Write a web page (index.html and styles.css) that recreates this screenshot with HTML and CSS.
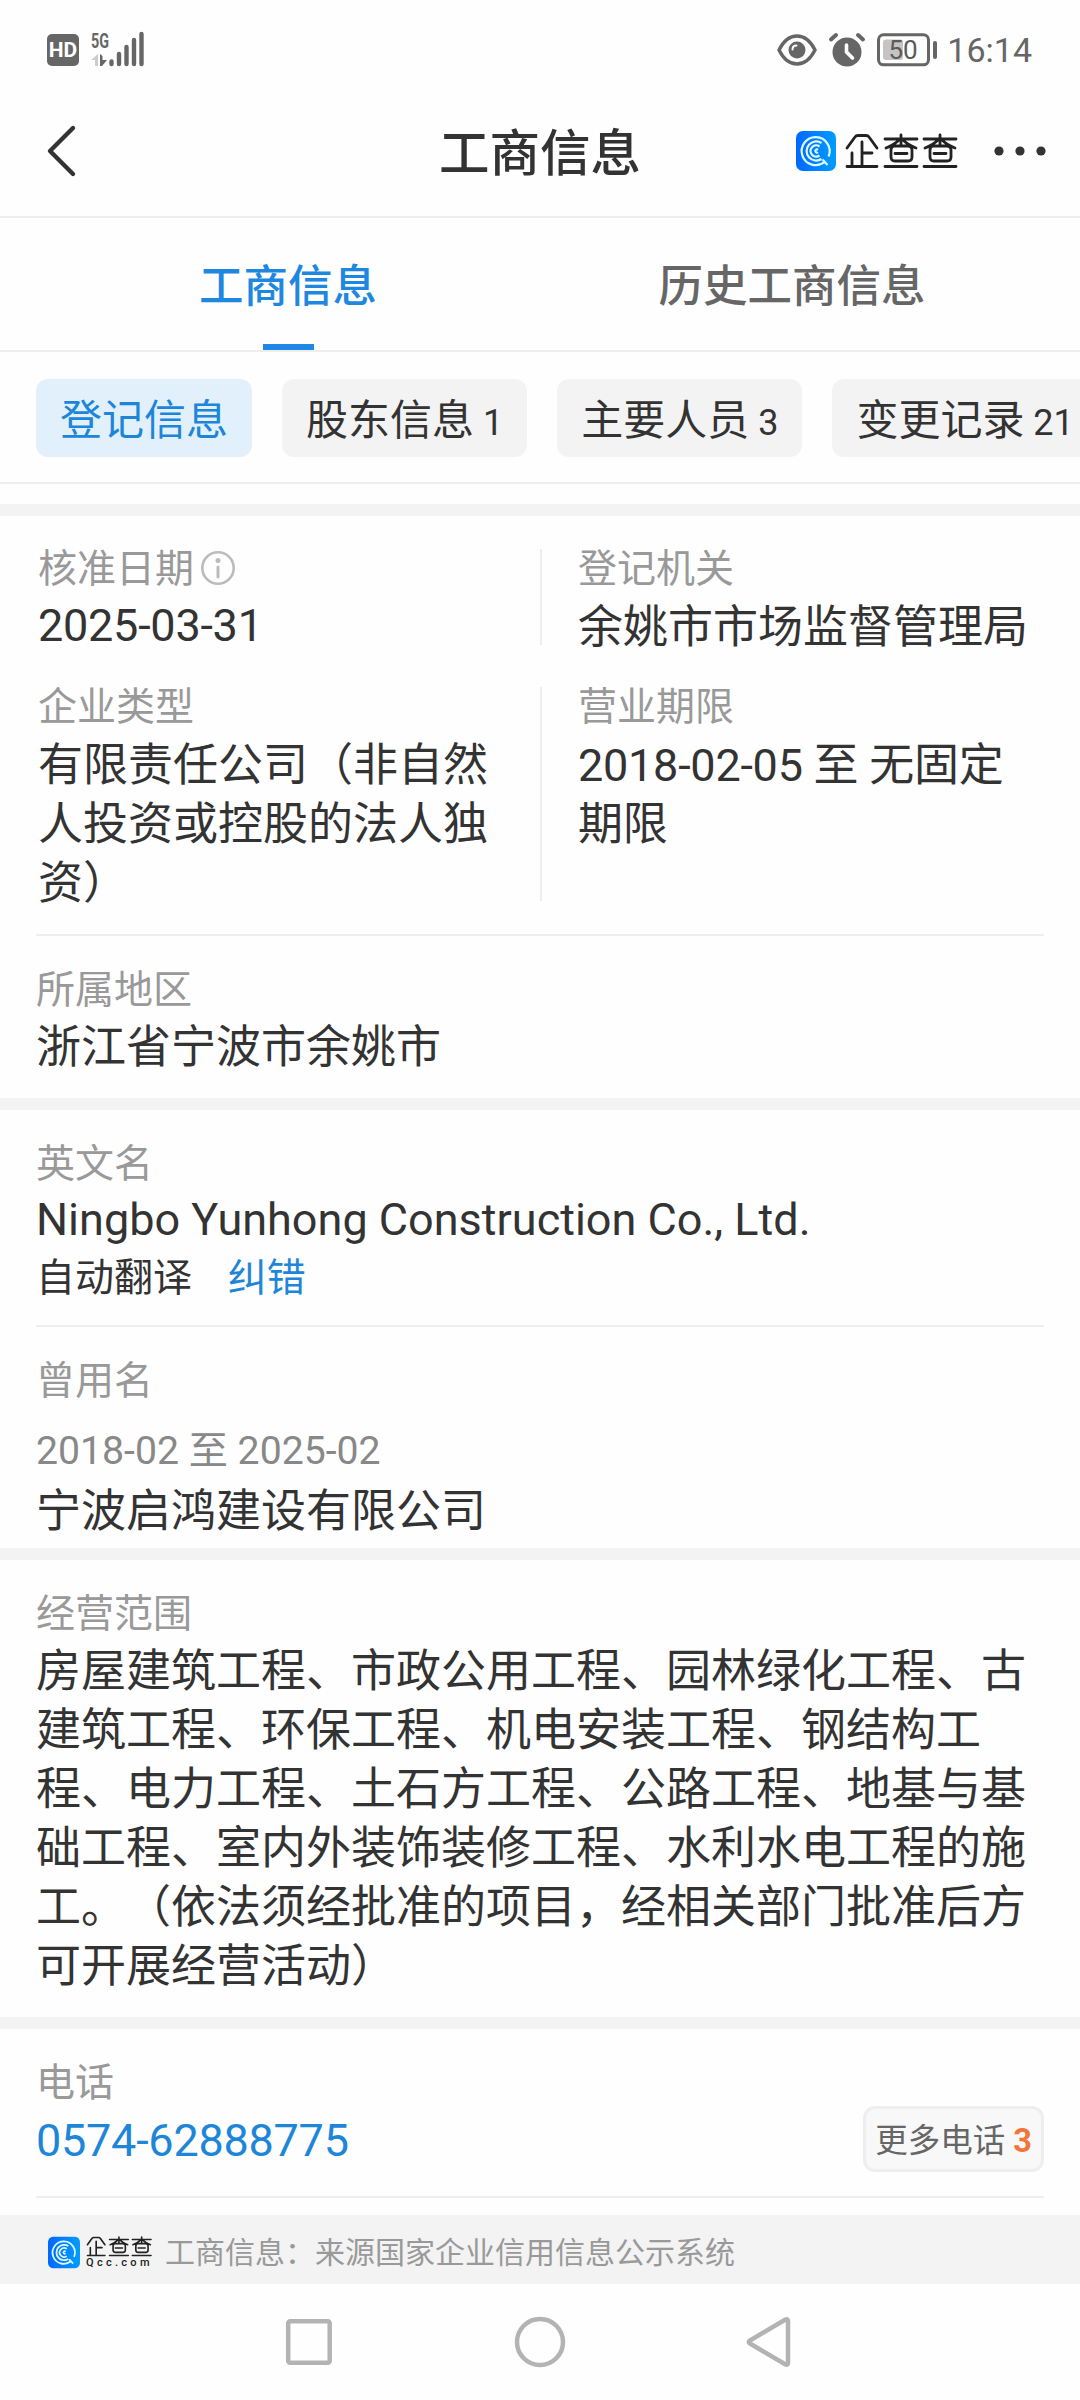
FILE: index.html
```
<!DOCTYPE html>
<html lang="zh-CN">
<head>
  <meta charset="UTF-8">
  <meta name="viewport" content="width=device-width, initial-scale=1.0">
  <title>工商信息</title>
  <link rel="stylesheet" href="styles.css">
</head>
<body>
  <!-- shared logo -->
  <svg class="defs" width="0" height="0">
    <defs>
      <linearGradient id="logoBg" x1="0" y1="0" x2="1" y2="0">
        <stop offset="0" stop-color="#0068ff"/>
        <stop offset="1" stop-color="#009dff"/>
      </linearGradient>
      <symbol id="logo" viewBox="0 0 40 40">
        <rect width="40" height="40" rx="7" fill="url(#logoBg)"/>
        <g fill="none" stroke="#dcfaff" stroke-width="2.2">
          <path d="M32.6 25.500A14 14 0 1 0 28.500 31M26.500 28.500l5 5.500"/>
          <path d="M25.500 12A9.600 9.600 0 1 0 25.500 28"/>
          <path d="M23.500 15.500A5.600 5.600 0 1 0 23.500 24.500"/>
          <path d="M22 18.800A1.600 1.600 0 1 0 22 21.200"/>
        </g>
      </symbol>
      <symbol id="wordmark" viewBox="0 0 114 36">
        <g fill="none" stroke="#222" stroke-width="2.8" stroke-linecap="round" stroke-linejoin="round">
          <path d="M2 15L10 4Q11 2.500 13 2.500H21Q23 2.500 24 4L32 15M17 9V33M17 20H27M7 20V33M2 33.500H32"/>
          <path id="cha" d="M40 6H72M56 2V12M54 7Q49 12 41 15M58 7Q63 12 71 15M49 13H63Q67 13 67 17V24Q67 28 63 28H50Q46 28 46 24V17Q46 13 49 13M50 20.500H62M40 33.500H72"/>
          <use href="#cha" x="39"/>
        </g>
      </symbol>
    </defs>
  </svg>

  <div class="status-bar">
    <div class="status-left">
      <span class="hd">HD</span>
      <svg class="signal" width="54" height="40" viewBox="0 -2 54 40">
        <text x="0" y="15.500" font-size="21" font-weight="700" textLength="18" lengthAdjust="spacingAndGlyphs" fill="#666">5G</text>
        <path d="M7 22V34H4V28H0Z" fill="#ccc"/>
        <path d="M9 22L11.500 24V28H16L11 34H9Z" fill="#666"/>
        <path d="M20.500 29.500V32M28 22V32M35.500 15V32M43 8V32M50.500 2V32" stroke="#666" stroke-width="4.400" stroke-linecap="round"/>
      </svg>
    </div>
    <div class="status-right">
      <svg width="40" height="32" viewBox="0 0 40 32">
        <path d="M2 16Q9 2 20 2T38 16Q31 30 20 30T2 16Z" fill="none" stroke="#666" stroke-width="3.400"/>
        <circle cx="20" cy="16" r="8.500" fill="#666"/>
        <path d="M15.500 15.500Q15.500 11.500 19.500 11.500" fill="none" stroke="#fff" stroke-width="2" stroke-linecap="round"/>
      </svg>
      <svg class="alarm" width="36" height="34" viewBox="0 0 36 34">
        <circle cx="18" cy="19" r="14.500" fill="#666"/>
        <path d="M2 6.500L7 2M34 6.500L29 2" stroke="#666" stroke-width="4" stroke-linecap="round"/>
        <path d="M17.500 12V19L23.500 25" fill="none" stroke="#fff" stroke-width="3.600" stroke-linecap="round"/>
      </svg>
      <svg class="battery" width="61" height="34" viewBox="0 0 61 34">
        <rect x="1.500" y="1.800" width="50" height="30" rx="5" fill="none" stroke="#666" stroke-width="3"/>
        <rect x="6" y="6.500" width="20" height="20.500" rx="3" fill="#c4c4c4"/>
        <rect x="56" y="8" width="4" height="18" rx="2" fill="#666"/>
        <text x="26" y="25.500" font-size="26" text-anchor="middle" fill="#5a5a5a">50</text>
      </svg>
      <span class="time">16:14</span>
    </div>
  </div>

  <header class="header">
    <svg class="back" width="30" height="54" viewBox="0 0 30 54">
      <path d="M26 4L3 27L26 50" fill="none" stroke="#333" stroke-width="4.400" stroke-linecap="round" stroke-linejoin="round"/>
    </svg>
    <h1>工商信息</h1>
    <div class="header-right">
      <svg class="logo" width="40" height="40"><use href="#logo"/></svg>
      <svg class="wordmark" width="114" height="36" role="img" aria-label="企查查"><use href="#wordmark"/></svg>
      <svg class="more" width="54" height="12" viewBox="0 0 54 12" fill="#333">
        <circle cx="6" cy="6" r="4.600"/><circle cx="27" cy="6" r="4.600"/><circle cx="48" cy="6" r="4.600"/>
      </svg>
    </div>
  </header>

  <nav class="tabs">
    <a class="tab active">工商信息</a>
    <a class="tab">历史工商信息</a>
  </nav>

  <div class="chips">
    <a class="chip active">登记信息</a>
    <a class="chip">股东信息<span> 1</span></a>
    <a class="chip">主要人员<span> 3</span></a>
    <a class="chip">变更记录<span> 21</span></a>
  </div>

  <main>
    <section class="block base-info">
      <div class="row">
        <div class="cell">
          <div class="label">核准日期
            <svg class="info" width="36" height="36" viewBox="0 0 36 36">
              <circle cx="18" cy="18" r="15.700" fill="none" stroke="#bbb" stroke-width="2.600"/>
              <circle cx="18" cy="10.500" r="2.500" fill="#bbb"/>
              <path d="M18 17V27" stroke="#bbb" stroke-width="3" stroke-linecap="round"/>
            </svg>
          </div>
          <div class="value date">2025-03-31</div>
        </div>
        <div class="rule"></div>
        <div class="cell">
          <div class="label">登记机关</div>
          <div class="value">余姚市市场监督管理局</div>
        </div>
      </div>
      <div class="row">
        <div class="cell">
          <div class="label">企业类型</div>
          <div class="value">有限责任公司（非自然人投资或控股的法人独资）</div>
        </div>
        <div class="rule"></div>
        <div class="cell">
          <div class="label">营业期限</div>
          <div class="value term">2018-02-05 至 无固定期限</div>
        </div>
      </div>
      <div class="item region">
        <div class="label">所属地区</div>
        <div class="value">浙江省宁波市余姚市</div>
      </div>
    </section>

    <section class="block names">
      <div class="item english">
        <div class="label">英文名</div>
        <div class="value">Ningbo Yunhong Construction Co., Ltd.</div>
        <div class="note">自动翻译 <a>纠错</a></div>
      </div>
      <div class="item former">
        <div class="label">曾用名</div>
        <div class="period">2018-02 至 2025-02</div>
        <div class="value">宁波启鸿建设有限公司</div>
      </div>
    </section>

    <section class="block scope">
      <div class="label">经营范围</div>
      <div class="value">房屋建筑工程、市政公用工程、园林绿化工程、古建筑工程、环保工程、机电安装工程、钢结构工程、电力工程、土石方工程、公路工程、地基与基础工程、室内外装饰装修工程、水利水电工程的施工。（依法须经批准的项目，经相关部门批准后方可开展经营活动）</div>
    </section>

    <section class="block phone">
      <div class="phone-row">
        <div>
          <div class="label">电话</div>
          <div class="value"><a>0574-62888775</a></div>
        </div>
        <button class="more-phone">更多电话 <b>3</b></button>
      </div>
    </section>
  </main>

  <footer class="source">
    <svg width="32" height="33" viewBox="0 0 40 40"><use href="#logo"/></svg>
    <div class="brand">
      <svg width="67" height="21" viewBox="0 0 114 36" role="img" aria-label="企查查"><use href="#wordmark"/></svg>
      <span>Qcc.com</span>
    </div>
    <p>工商信息：来源国家企业信用信息公示系统</p>
  </footer>

  <div class="nav-bar">
    <svg width="54" height="54" viewBox="0 0 54 54"><rect x="6.200" y="6.200" width="41.500" height="41.500" rx="2"/></svg>
    <svg width="54" height="54" viewBox="0 0 54 54"><circle cx="27" cy="27" r="23"/></svg>
    <svg width="54" height="54" viewBox="0 0 54 54"><path d="M41.500 4.500L6 25.500Q3.500 27 6 28.500L41.500 49.500Q44 50.500 44 48V6Q44 3.500 41.500 4.500Z"/></svg>
  </div>
</body>
</html>
```
FILE: styles.css
```
* {
  box-sizing: border-box;
}
body {
  margin: 0;
  width: 1080px;
  height: 2400px;
  overflow: hidden;
  display: flex;
  flex-direction: column;
  background: #fefefe;
  color: #333;
  font-family: Roboto, "Noto Sans CJK SC", sans-serif;
  text-spacing-trim: space-all;
}
svg {
  display: block;
  flex: none;
  overflow: visible;
}
.defs {
  position: absolute;
}
a {
  color: #1e86d8;
}

/* status bar */
.status-bar {
  height: 100px;
  padding: 0 48px 0 47px;
  display: flex;
  justify-content: space-between;
  align-items: center;
  color: #666;
}
.status-left, .status-right {
  display: flex;
  align-items: center;
}
.hd {
  width: 32px;
  height: 32px;
  border-radius: 5px;
  background: #666;
  color: #fff;
  font-size: 21px;
  font-weight: 700;
  line-height: 33px;
  text-align: center;
}
.signal {
  margin-left: 12px;
}
.alarm {
  margin-left: 12px;
}
.battery {
  margin-left: 12px;
}
.time {
  margin-left: 9px;
  font-size: 34px;
  line-height: 40px;
}

/* header */
.header {
  height: 118px;
  border-bottom: 2px solid #eee;
  display: grid;
  grid-template-columns: 1fr auto 1fr;
  align-items: center;
  padding: 0 33px 14px;
}
.back {
  margin-left: 14px;
}
.header h1 {
  margin: 5px 0 0;
  font-size: 50.5px;
  font-weight: 500;
  line-height: 60px;
}
.header-right {
  display: flex;
  justify-content: flex-end;
  align-items: center;
}
.wordmark {
  margin-left: 9px;
}
.more {
  margin-left: 34px;
}

/* tabs */
.tabs {
  height: 134px;
  border-bottom: 2px solid #eee;
  padding: 0 36px;
  display: grid;
  grid-template-columns: 1fr 1fr;
}
.tab {
  display: flex;
  flex-direction: column;
  align-items: center;
  justify-content: space-between;
  padding-top: 39px;
  font-size: 44.5px;
  font-weight: 500;
  line-height: 60px;
  color: #666;
}
.tab.active {
  color: #1e88e0;
}
.tab.active::after {
  content: "";
  width: 51px;
  height: 6px;
  background: #1e88e5;
}

.chips {
  height: 132px;
  border-bottom: 2px solid #eee;
  padding: 27px 0 0 36px;
  display: flex;
  gap: 30px;
  overflow: hidden;
}
.chip {
  flex: none;
  height: 78px;
  padding: 0 24px;
  border-radius: 12px;
  background: #f3f3f3;
  color: #333;
  font-size: 42px;
  line-height: 83px;
  white-space: pre;
}
.chip.active {
  background: #e2f0fc;
  color: #1e86d8;
}
.chip span {
  font-size: 36px;
}

/* blocks */
main {
  margin-top: 20px;
  height: 1711px;
}
.block {
  border-top: 12px solid #f3f3f3;
}
.label {
  display: flex;
  align-items: center;
  font-size: 39px;
  line-height: 46px;
  margin-bottom: 5px;
  color: #999;
}
.info {
  margin: -2px 0 0 6px;
}
.value {
  font-size: 45px;
  line-height: 59px;
}
.date, .term, .phone .value {
  letter-spacing: -0.25px;
}
.row {
  display: flex;
  padding: 0 36px 0 38px;
}
.row + .row {
  margin-top: 27px;
}
.row .label {
  margin-bottom: 6px;
}
.row .date {
  margin-top: -2px;
}
.cell {
  width: 466px;
}
.rule {
  width: 2px;
  margin: 3px 36px 12px 0;
  background: #eee;
}
.row .cell:first-child {
  width: 502px;
  padding-right: 36px;
}
.item, .phone-row {
  margin: 0 36px;
}

.base-info {
  height: 594px;
  padding-top: 30px;
}
.base-info .region {
  margin-top: 21px;
  border-top: 2px solid #eee;
  padding-top: 31px;
}

.names {
  height: 450px;
  padding-top: 31px;
}
.english .label {
  margin-bottom: 3px;
}
.note {
  margin-top: 1px;
  font-size: 39px;
  line-height: 56px;
}
.note a {
  margin-left: 26px;
}
.names .former {
  margin-top: 19px;
  border-top: 2px solid #eee;
  padding-top: 31px;
}
.period {
  margin-top: 16px;
  font-size: 39.2px;
  line-height: 62px;
  color: #888;
}

.scope {
  height: 469px;
  padding: 31px 36px 0;
}

.phone {
  padding-top: 31px;
}
.phone-row {
  display: flex;
  justify-content: space-between;
  align-items: flex-end;
  padding-bottom: 24px;
  border-bottom: 2px solid #eee;
}
.phone-row .value {
  margin-bottom: 2px;
}
.more-phone {
  width: 181px;
  height: 66px;
  padding: 3px 0 0;
  border: 3px solid #eee;
  border-radius: 12px;
  background: #f8f8f8;
  color: #666;
  font-family: inherit;
  font-size: 32.5px;
  line-height: 56px;
  white-space: nowrap;
}
.more-phone b {
  color: #f0763a;
}

/* data source */
.source {
  height: 69px;
  padding: 5px 48px 0;
  display: flex;
  align-items: center;
  background: #f3f3f3;
  color: #999;
}
.brand {
  width: 67px;
  margin: 0 12px 0 6px;
}
.brand span {
  display: block;
  font-size: 11px;
  font-weight: 500;
  line-height: 12px;
  letter-spacing: 3.3px;
  color: #222;
}
.source p {
  margin: 1px 0 0;
  font-size: 30px;
  line-height: 40px;
  white-space: nowrap;
}

.nav-bar {
  height: 116px;
  display: flex;
  justify-content: center;
  align-items: center;
  gap: 177px;
  fill: none;
  stroke: #b3b3b3;
  stroke-width: 4.5;
}
```
